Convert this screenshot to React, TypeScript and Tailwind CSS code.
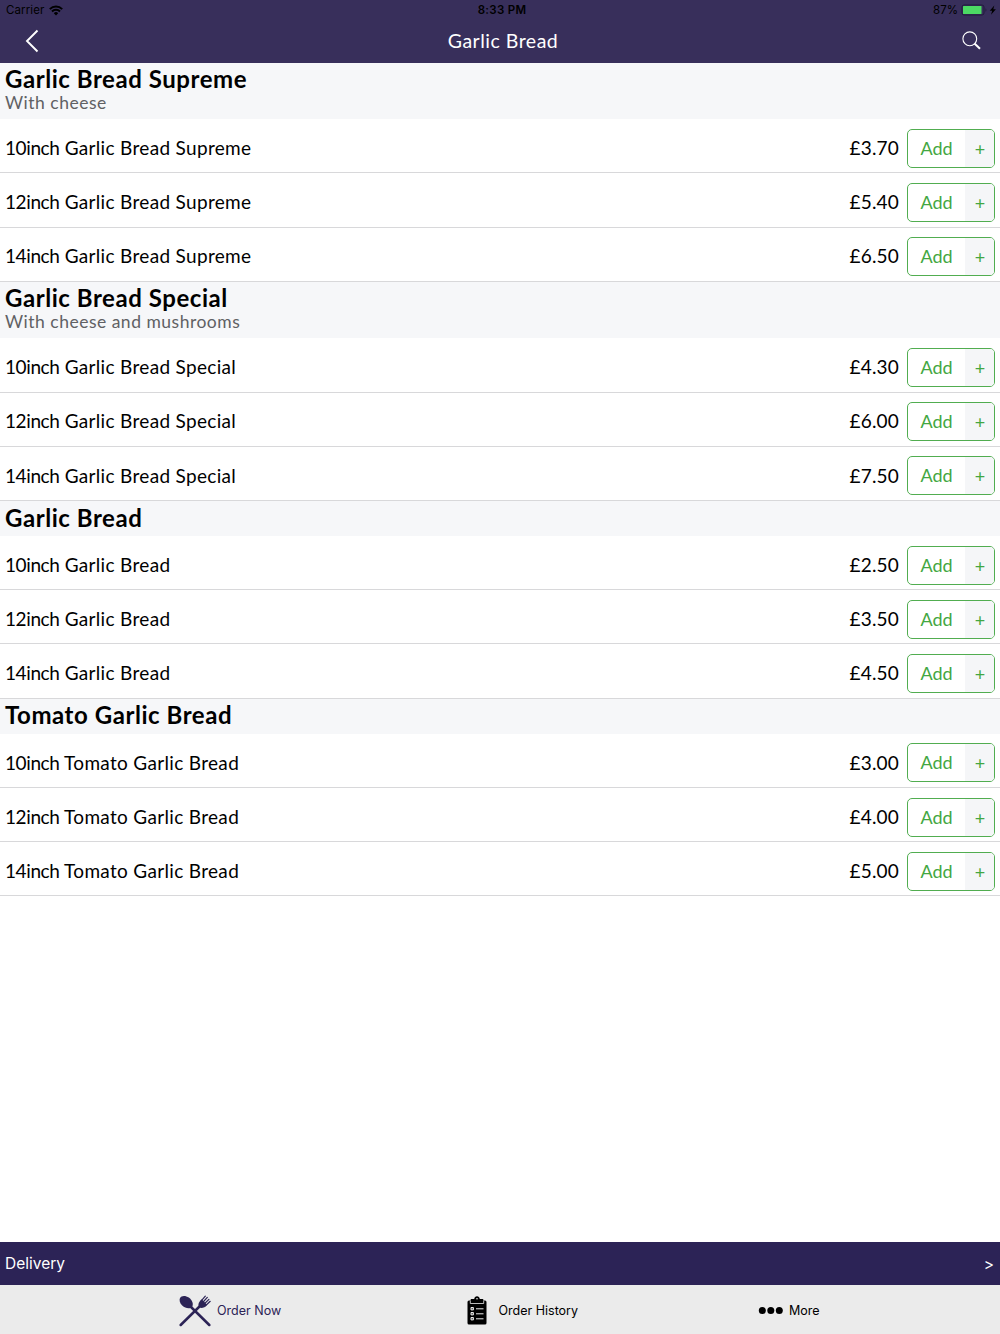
type Item = { size: string; price: string };
type Section = { title: string; description?: string; items: Item[] };

const sections: Section[] = [
    {
        title: 'Garlic Bread Supreme',
        description: 'With cheese',
        items: [
            { size: '10inch', price: '£3.70' },
            { size: '12inch', price: '£5.40' },
            { size: '14inch', price: '£6.50' },
        ],
    },
    {
        title: 'Garlic Bread Special',
        description: 'With cheese and mushrooms',
        items: [
            { size: '10inch', price: '£4.30' },
            { size: '12inch', price: '£6.00' },
            { size: '14inch', price: '£7.50' },
        ],
    },
    {
        title: 'Garlic Bread',
        items: [
            { size: '10inch', price: '£2.50' },
            { size: '12inch', price: '£3.50' },
            { size: '14inch', price: '£4.50' },
        ],
    },
    {
        title: 'Tomato Garlic Bread',
        items: [
            { size: '10inch', price: '£3.00' },
            { size: '12inch', price: '£4.00' },
            { size: '14inch', price: '£5.00' },
        ],
    },
];

function WifiIcon() {
    return (
        <svg width="14" height="11" viewBox="0 0 14 11" fill="none" stroke="#000" strokeWidth="2">
            <path d="M0.8 4.1a8.8 8.8 0 0 1 12.4 0" />
            <path d="M3 6.5a5.6 5.6 0 0 1 8 0" />
            <path d="M7 10.4 4.8 8.2a3.1 3.1 0 0 1 4.4 0z" fill="#000" stroke="none" />
        </svg>
    );
}

function CutleryIcon() {
    return (
        <svg width="32" height="32" viewBox="0 0 32 32" fill="#2c2356">
            <path d="M1 3C2.200.5 6.500.2 9.800 2.600c3.600 2.700 5 7 3.200 9.400-1.900 2.200-6.700 1.600-9.800-1.400C.8 8.200 0 5.200 1 3z" />
            <path d="M11 11 30.300 30" stroke="#2c2356" strokeWidth="2.500" strokeLinecap="round" />
            <path d="M21 11 1.700 30" stroke="#2c2356" strokeWidth="2.500" strokeLinecap="round" />
            <path d="M21 6c-2 2.200-2 4.600-.7 6 1.400 1.300 3.900 1.400 6-.5l1.700-1.700L22.700 4.300z" />
            <path d="m21.800 6.300 4.500-5.100M23.700 7.500l4.600-5.100M25.200 9l4.700-4.700M26.500 10.800l4.700-4.500" stroke="#2c2356" strokeWidth="1.200" strokeLinecap="round" />
        </svg>
    );
}

function ClipboardIcon() {
    return (
        <svg width="20" height="29" viewBox="0 0 20 29">
            <path d="M2 4.500h16a1.500 1.500 0 0 1 1.500 1.500v21a1.500 1.500 0 0 1-1.500 1.500H2A1.500 1.500 0 0 1 .5 27V6A1.500 1.500 0 0 1 2 4.500z" />
            <path d="M3.500 7.300V4.300c0-.8.5-1.300 1.300-1.300h2.400C7.500 1.200 8.500.2 10 .2s2.500 1 2.800 2.800h2.400c.8 0 1.300.5 1.300 1.300v3z" />
            <path d="M3.300 4.500v3h13.400v-3" fill="none" stroke="#ebebeb" strokeWidth=".8" />
            <circle cx="10" cy="2.800" r=".8" fill="#ebebeb" />
            <g fill="#555" stroke="#ebebeb" strokeWidth="1">
                <path d="M4 11.500h2.400v2.400H4zM4 16.500h2.400v2.400H4zM4 21.500h2.400v2.400H4z" />
                <path d="M9 12.800h7.500M9 17.800h7.500M9 22.800h7.500" />
            </g>
        </svg>
    );
}

function ItemRow({ item, title }: { item: Item; title: string }) {
    return (
        <div className="flex h-[54.200px] items-center border-b border-[#d8d8da] bg-white px-[5px] text-[19px]">
            <span className="flex-1 pt-[5px] tracking-[0.320px]">
                <span className="tracking-[-0.400px]">{item.size}</span> {title}
            </span>
            <span className="mr-2 pt-[5px] tracking-[0.180px]">{item.price}</span>
            <button className="mt-[5px] flex h-[39px] w-[88px] rounded-[5px] border border-[#51ad50] text-[#43a742]">
                <span className="flex h-full flex-1 items-center justify-center text-[18px]">Add</span>
                <span className="flex h-full w-[29px] items-center justify-center rounded-r-[4px] bg-[#f5f6f8] pt-[2px] pl-[1px] text-[18px]">+</span>
            </button>
        </div>
    );
}

export default function App() {
    return (
        <div className="flex h-[1334px] w-[1000px] flex-col bg-white font-['Lato',sans-serif] text-black">
            {/* Status bar + navigation */}
            <header className="h-[62.500px] shrink-0 bg-[#382f5b]">
                <div className="grid h-[21px] grid-cols-3 items-center pr-1 pl-1.5 font-['Inter',sans-serif] text-[11.500px]">
                    <div className="flex items-center gap-[5px]">
                        <span className="pt-px tracking-[0.100px]">Carrier</span>
                        <WifiIcon />
                    </div>
                    <span className="pt-px pl-0.5 text-center font-semibold tracking-[0.300px]">8:33 PM</span>
                    <div className="flex items-center justify-end gap-[3px]">
                        <span className="pt-px">87%</span>
                        <svg className="-mt-px -mr-px" width="36" height="12" viewBox="0 0 36 12">
                            <rect x="1" y="1" width="22" height="10" rx="2" fill="none" stroke="#211b3c" />
                            <rect x="2" y="2" width="18.500" height="8" rx=".5" fill="#4cd964" />
                            <path d="M24.500 4.300v3.500c1.200-.4 1.200-3 0-3.500z" fill="#211b3c" />
                            <path d="M33.300 1.500 28.700 6.800h2.500l-1.200 4 4.900-5.500h-2.600z" />
                        </svg>
                    </div>
                </div>
                <div className="grid h-[40px] grid-cols-3 items-center text-white">
                    <svg className="ml-[25px]" width="14" height="24" viewBox="0 0 14 24" fill="none" stroke="currentColor" strokeWidth="1.900">
                        <path d="M12.500 1.500 2 12l10.500 10.500" />
                    </svg>
                    <h1 className="pl-1.5 text-center text-[19.500px] tracking-[0.500px]">Garlic Bread</h1>
                    <svg className="mr-[19px] -mt-px justify-self-end" width="19" height="19" viewBox="0 0 19 19" fill="none" stroke="currentColor">
                        <circle cx="7.800" cy="7.800" r="6.900" strokeWidth="1.100" />
                        <path d="m12.500 12.500 5.500 5.300" strokeWidth="2" />
                    </svg>
                </div>
            </header>

            {/* Menu */}
            <main className="min-h-0 flex-1">
                {sections.map((section) => (
                    <section key={section.title}>
                        <div className={`bg-[#f6f7f9] pt-[2.500px] pl-[5px] ${section.description ? 'h-[56.700px]' : 'h-[35.100px]'}`}>
                            <h2 className="text-[24px] leading-[28px] font-bold tracking-[0.550px]">{section.title}</h2>
                            {section.description && (
                                <p className="text-[17.500px] leading-[20px] tracking-[0.500px] text-[#606164]">{section.description}</p>
                            )}
                        </div>
                        {section.items.map((item) => (
                            <ItemRow key={item.size} item={item} title={section.title} />
                        ))}
                    </section>
                ))}
            </main>

            {/* Order type */}
            <div className="flex h-[43px] shrink-0 items-center justify-between bg-[#2c2356] pr-[6px] pl-[5px] font-['Inter',sans-serif] text-[15.500px] text-white">
                <span className="pt-px">Delivery</span>
                <span className="pt-0.5">&gt;</span>
            </div>

            {/* Tab bar */}
            <nav className="flex h-[49px] shrink-0 items-center bg-[#ebebeb] pt-[2px] pl-[179px] font-['Inter',sans-serif] text-[12.500px]">
                <div className="flex w-[287px] items-center gap-1.5 text-[#2c2356]">
                    <CutleryIcon />
                    <span className="pt-px">Order Now</span>
                </div>
                <div className="flex w-[292px] items-center gap-3 pl-[0.500px]">
                    <ClipboardIcon />
                    <span className="pt-px">Order History</span>
                </div>
                <div className="flex items-center gap-1.5">
                    <svg width="25" height="8" viewBox="0 0 25 8">
                        <circle cx="4.300" cy="3.500" r="3.500" />
                        <circle cx="12.800" cy="3.500" r="3.500" />
                        <circle cx="21.300" cy="3.500" r="3.500" />
                    </svg>
                    <span className="pt-px">More</span>
                </div>
            </nav>
        </div>
    );
}
